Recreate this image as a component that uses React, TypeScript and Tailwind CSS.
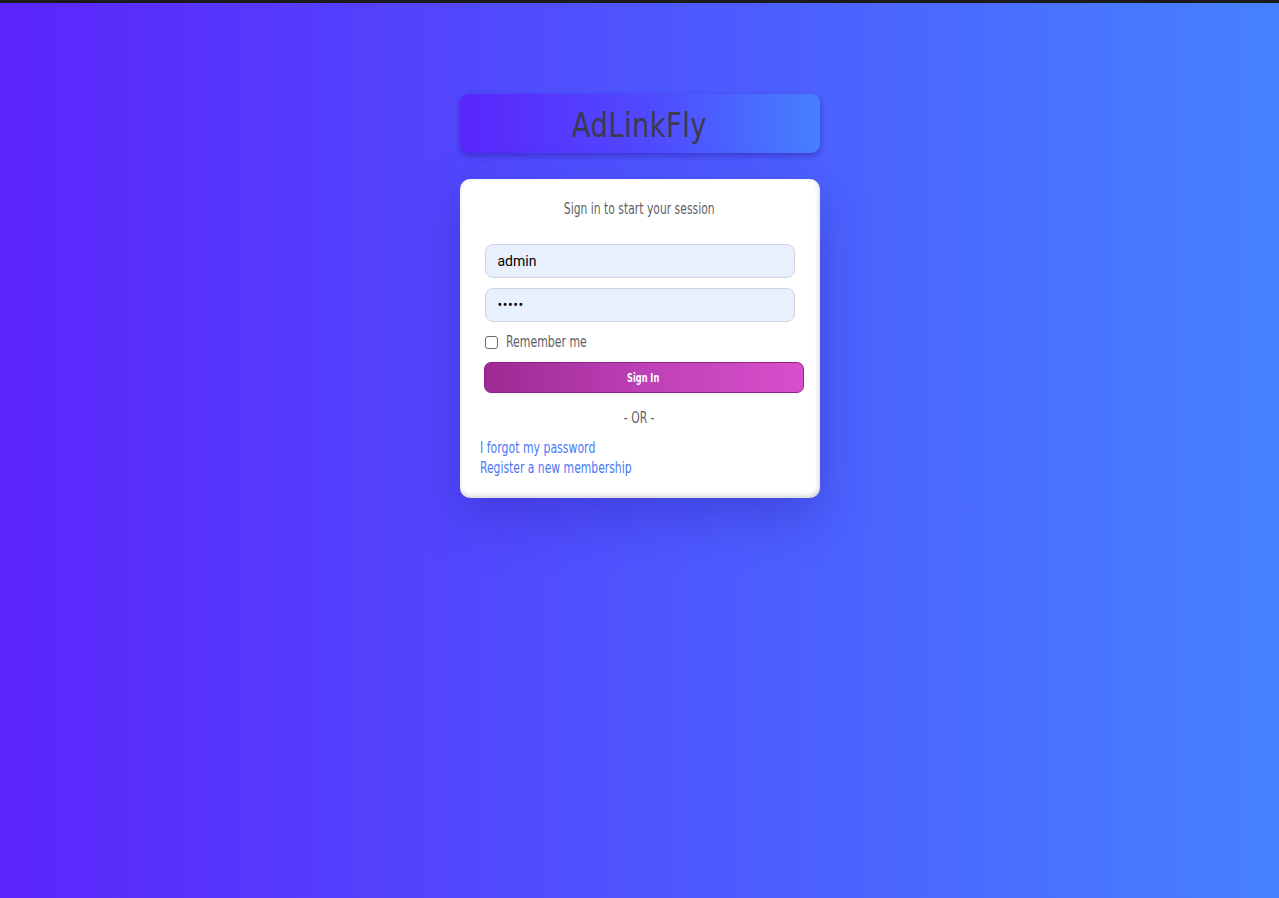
import React from "react";

export default function App() {
  const font = { fontFamily: '"DejaVu Sans Condensed", "Liberation Sans", sans-serif' };
  return (
    <div className="w-[1279px] h-[898px] overflow-hidden bg-[#1b1b1b] flex flex-col" style={font}>
      <div className="h-[3px] bg-[#1b1b1b]" />
      <div className="flex-1 bg-[linear-gradient(to_right,#5b24fb,#4e55fe_50%,#4681ff)] flex flex-col items-center">
        <div className="mt-[91px] w-[360px] h-[59px] rounded-[9px] bg-[linear-gradient(to_right,#5a26fb,#4f4cff_55%,#4680ff)] shadow-[0_3px_6px_rgba(40,20,150,0.45)] flex items-center justify-center pt-[5px]">
          <span className="inline-block scale-x-[0.92] text-[33px] text-[#3b3a4e] tracking-[0.5px]">AdLinkFly</span>
        </div>
        <div className="mt-[26px] w-[360px] bg-white rounded-[10px] shadow-[0_20px_50px_rgba(40,30,170,0.35),inset_0_-3px_4px_rgba(0,0,0,0.12),inset_-3px_0_4px_rgba(0,0,0,0.06)] px-[20px] pt-[20px] pb-[20px]">
          <p className="text-center text-[15px] leading-[20px] text-[#5f5f66]">
            <span className="inline-block scale-x-[0.8]">Sign in to start your session</span>
          </p>
          <div className="mt-[25px] ml-[5px] w-[310px] h-[34px] rounded-[8px] bg-[#e8f0fe] border border-[#cfd6e2] flex items-center pl-[12px] text-[14px] text-black" style={{ fontFamily: 'Roboto, "Liberation Sans", sans-serif' }}>admin</div>
          <div className="mt-[10px] ml-[5px] w-[310px] h-[34px] rounded-[8px] bg-[#e8f0fe] border border-[#cfd6e2] flex items-center pl-[12px] text-[14px] text-black tracking-[0.5px]" style={{ fontFamily: 'Roboto, "Liberation Sans", sans-serif' }}>•••••</div>
          <div className="mt-[13px] ml-[5px] flex items-center h-[14px]">
            <span className="w-[13px] h-[13px] rounded-[3px] border border-[#6b6b6b] bg-white" />
            <span className="ml-[8px] inline-block origin-left scale-x-[0.81] text-[15px] text-[#5f5f66]">Remember me</span>
          </div>
          <div className="mt-[13px] ml-[4px] w-[320px] h-[31px] rounded-[7px] bg-[linear-gradient(to_right,#9d2a93,#bd40b6_50%,#d84fcb)] border border-[#8f2288] flex items-center justify-center text-white text-[12px] font-bold">
            <span className="inline-block scale-x-[0.76]">Sign In</span>
          </div>
          <p className="mt-[15px] text-center text-[15px] leading-[20px] text-[#5f5f66]">
            <span className="inline-block scale-x-[0.8]">- OR -</span>
          </p>
          <div className="mt-[10px] flex flex-col items-start text-[15px] leading-[20px] text-[#4a78f5]">
            <span className="inline-block origin-left scale-x-[0.81]">I forgot my password</span>
            <span className="inline-block origin-left scale-x-[0.8]">Register a new membership</span>
          </div>
        </div>
      </div>
    </div>
  );
}
